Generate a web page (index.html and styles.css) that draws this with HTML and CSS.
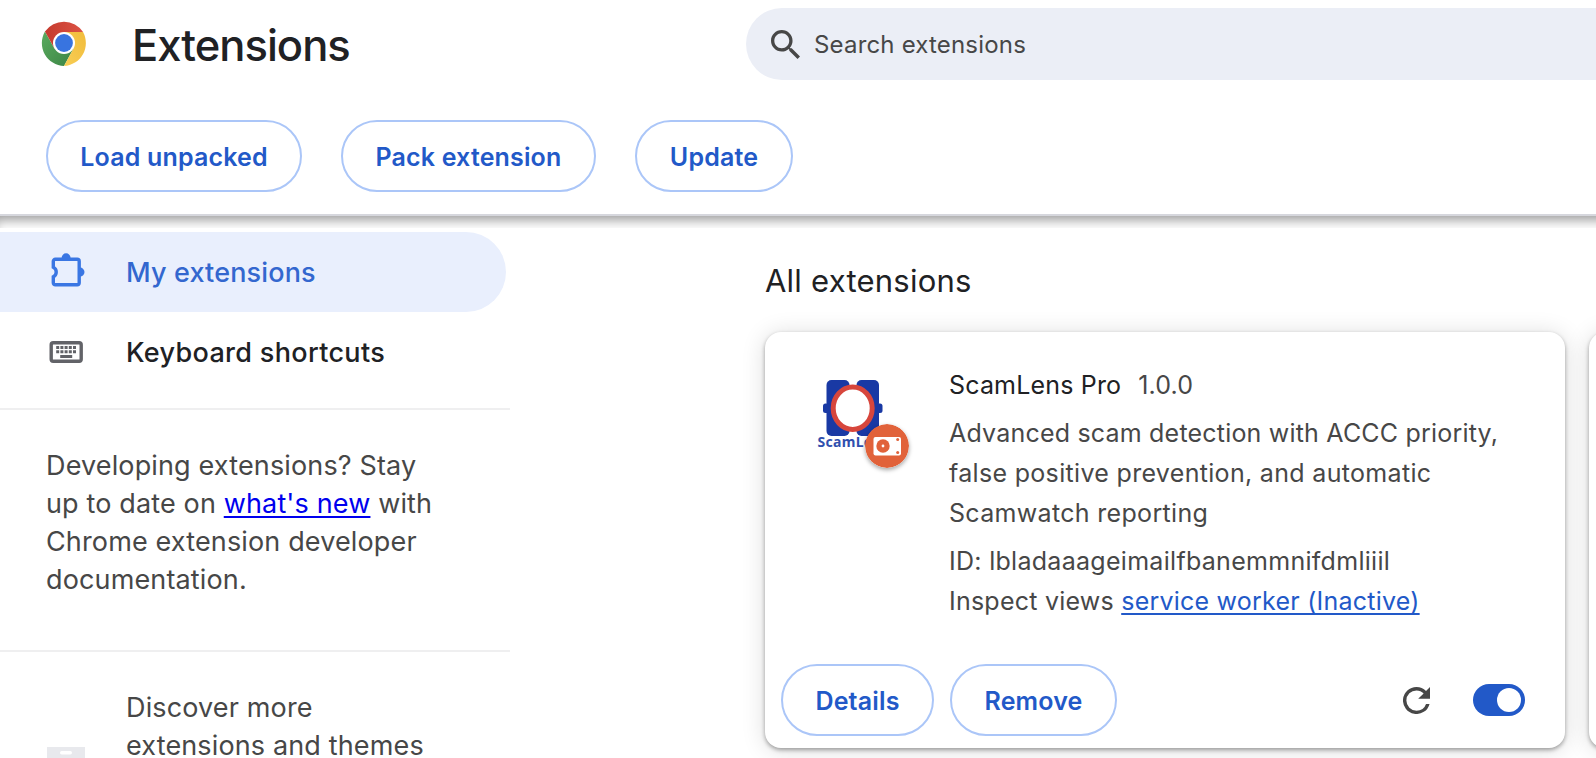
FILE: index.html
```html
<!DOCTYPE html>
<html lang="en">
<head>
<meta charset="utf-8">
<title>Extensions</title>
<link rel="stylesheet" href="styles.css">
</head>
<body>
<header class="toolbar">
  <div class="topbar">
    <div class="brand">
      <svg class="chrome-logo" viewBox="0 0 46 46" aria-hidden="true">
        <defs>
          <linearGradient id="red" x1="0" x2="1"><stop offset="0" stop-color="#c53a2e"/><stop offset="1" stop-color="#dc5344"/></linearGradient>
          <linearGradient id="green" x1="1" x2="0" y1="1" y2="0"><stop offset="0" stop-color="#3b8545"/><stop offset="1" stop-color="#5bab5f"/></linearGradient>
          <linearGradient id="yellow" x1="1" x2="0" y1="0" y2="1"><stop offset="0" stop-color="#f1bc3c"/><stop offset="1" stop-color="#f8ce55"/></linearGradient>
        </defs>
        <path d="M23 23L13.47 28.5L3.95 11.5A23 23 0 0 0 23 46L32.53 28.5Z" fill="url(#green)"/>
        <path d="M23 12H42.05A23 23 0 0 1 23 46L32.53 28.5L23 23Z" fill="url(#yellow)"/>
        <path d="M23 23V12H42.05A23 23 0 0 0 3.95 11.5L13.47 28.5Z" fill="url(#red)"/>
        <circle cx="23" cy="23" r="11" fill="#fff"/>
        <circle cx="23" cy="23" r="8.9" fill="#3874e0"/>
      </svg>
      <h1 class="title">Extensions</h1>
    </div>
    <div class="search">
      <svg class="search-icon" viewBox="3 3 17.49 17.49" aria-hidden="true"><path d="M15.5 14h-.79l-.28-.27C15.41 12.59 16 11.11 16 9.5 16 5.91 13.09 3 9.5 3S3 5.91 3 9.5 5.91 16 9.5 16c1.61 0 3.09-.59 4.23-1.57l.27.28v.79l5 4.99L20.49 19l-4.99-5zm-6 0C7.01 14 5 11.99 5 9.5S7.01 5 9.5 5 14 7.01 14 9.5 11.99 14 9.5 14z"/></svg>
      <span class="search-label">Search extensions</span>
    </div>
  </div>
  <div class="dev-actions">
    <button class="btn load">Load unpacked</button>
    <button class="btn pack">Pack extension</button>
    <button class="btn update">Update</button>
  </div>
</header>
<div class="drop-shadow"></div>
<div class="layout">
  <nav class="sidebar">
    <a class="nav-item selected">
      <svg class="nav-icon" viewBox="0 0 34 34" aria-hidden="true">
        <path d="M5.300 4.300H27.200a2 2 0 0 1 2 2V27.800a2 2 0 0 1-2 2H5.300a2 2 0 0 1-2-2V21.800a5.400 5.400 0 0 0 0-9.600V6.300a2 2 0 0 1 2-2Z" fill="none" stroke="currentColor" stroke-width="3.400"/>
        <path d="M11.600 3a4.500 4.700 0 0 1 9 0ZM30 12.600a4.500 4.500 0 0 1 0 9Z" fill="currentColor"/>
      </svg>
      <span class="nav-my">My extensions</span>
    </a>
    <a class="nav-item">
      <svg class="nav-icon keyboard" viewBox="0.500 0 34 34" aria-hidden="true">
        <rect x="1.700" y="7.700" width="30" height="18.600" rx="2" fill="none" stroke="currentColor" stroke-width="3.400"/>
        <path d="M6.700 11h3v3h-3zM10.900 11h3v3h-3zM15.100 11h3v3h-3zM19.300 11h3v3h-3zM23.500 11h3v3h-3zM6.700 15.300h3v3h-3zM10.900 15.300h3v3h-3zM15.100 15.300h3v3h-3zM19.300 15.300h3v3h-3zM23.500 15.300h3v3h-3zM10.700 20h12v3h-12z" fill="currentColor"/>
      </svg>
      <span class="nav-keys">Keyboard shortcuts</span>
    </a>
    <p class="dev-note">Developing extensions? Stay<br>up to date on <a href="#">what's new</a> with<br>Chrome extension developer<br>documentation.</p>
    <div class="discover">
      <svg class="store-icon" viewBox="0 0 38 30" aria-hidden="true"><path d="M0 0h38v30H0z" fill="#e8e9ed"/><rect x="13" y="4" width="12" height="3.400" rx="1.700" fill="#fff"/></svg>
      <p class="discover-text">Discover more<br>extensions and themes</p>
    </div>
  </nav>
  <main class="content">
    <h2 class="section-title">All extensions</h2>
    <div class="cards">
      <article class="card">
        <div class="card-main">
          <div class="ext-icon">
            <svg class="ext-logo" viewBox="0 0 72 72" aria-hidden="true">
              <g fill="#1939a4">
                <rect x="9.500" y="6" width="23" height="28" rx="5"/>
                <rect x="39.500" y="6" width="22.500" height="28" rx="5"/>
                <rect x="9.500" y="34" width="23" height="28" rx="5"/>
                <rect x="39.500" y="34" width="22.500" height="28" rx="5"/>
                <rect x="15" y="20" width="42" height="28"/>
                <rect x="6" y="29.500" width="9" height="9.500" rx="2.500"/>
                <rect x="56.500" y="29.500" width="9" height="9.500" rx="2.500"/>
              </g>
              <ellipse cx="35.700" cy="34.300" rx="19.500" ry="21.200" fill="#fff" stroke="#d7463c" stroke-width="5"/>
              <text class="logo-text" x="0.500" y="72.500">ScamLens</text>
            </svg>
            <svg class="badge" viewBox="0 0 44 44" aria-hidden="true">
              <circle cx="22" cy="22" r="22" fill="#e1623a"/>
              <rect x="8.500" y="13" width="27.500" height="18.500" rx="2" fill="#fff"/>
              <circle cx="18" cy="22" r="6.700" fill="#e1623a"/>
              <circle cx="18" cy="22" r="1.400" fill="#fff"/>
              <circle cx="32.700" cy="15.600" r="1.500" fill="#e1623a"/>
              <circle cx="32.700" cy="28.600" r="1.500" fill="#e1623a"/>
            </svg>
          </div>
          <div class="card-text">
            <div class="name-row"><span class="ext-name">ScamLens Pro</span><span class="version">1.0.0</span></div>
            <p class="description"><span class="line-first">Advanced scam detection with ACCC priority,</span><br>false positive prevention, and automatic<br>Scamwatch reporting</p>
            <div class="ext-id">ID: lbladaaageimailfbanemmnifdmliiil</div>
            <div class="inspect">Inspect views <a class="view-link" href="#">service worker (Inactive)</a></div>
          </div>
        </div>
        <div class="card-actions">
          <button class="btn details">Details</button>
          <button class="btn remove">Remove</button>
          <svg class="reload" viewBox="4 4 16 16" aria-hidden="true"><path d="M17.650 6.350A7.958 7.958 0 0 0 12 4a8 8 0 1 0 7.730 10h-2.080A5.990 5.990 0 0 1 12 18a6 6 0 1 1 0-12c1.660 0 3.140.69 4.220 1.780L13 11h7V4l-2.350 2.350z"/></svg>
          <span class="toggle"><span class="knob"></span></span>
        </div>
      </article>
      <article class="card"></article>
    </div>
  </main>
</div>
</body>
</html>
```
FILE: styles.css
```css
* { box-sizing: border-box; }
html, body { margin: 0; height: 758px; overflow: hidden; }
body {
  background: #fff;
  color: #474747;
  font-family: Inter, "Liberation Sans", sans-serif;
  font-size: 25px;
}
h1, h2, p { margin: 0; font-weight: 400; }
.toolbar { height: 216px; border-bottom: 2px solid #d6d7dd; }
.topbar { display: flex; padding-top: 8px; }
.brand { display: flex; align-items: center; width: 746px; height: 72px; padding-left: 41px; }
.chrome-logo { width: 46px; height: 46px; margin-bottom: 2px; flex: none; }
.title { margin-left: 45px; font-size: 43.5px; font-weight: 550; line-height: 72px; letter-spacing: -0.98px; color: #202124; padding-top: 2px; }
.search { flex: 1; display: flex; align-items: center; height: 72px; padding-left: 25px; border-radius: 36px 0 0 36px; background: #ebeef6; }
.search-icon { width: 29px; height: 29px; fill: #474747; }
.search-label { margin-left: 14px; padding-top: 2px; font-size: 24px; line-height: 70px; letter-spacing: 0.18px; }
.dev-actions { display: flex; gap: 39px; padding: 40px 0 0 46px; }
.btn {
  height: 72px;
  padding: 2px 0 0;
  border: 2px solid #abc6f8;
  border-radius: 36px;
  background: #fff;
  color: #2259c8;
  font: 600 25px/66px Inter, "Liberation Sans", sans-serif;
  letter-spacing: 0.16px;
  text-align: center;
  white-space: nowrap;
}
.load { width: 256px; }
.pack { width: 255px; }
.update { width: 158px; }
.drop-shadow { height: 12px; margin-right: -14px; box-shadow: inset 0 10px 12px -6px rgba(0, 0, 0, .4); }
.layout { display: flex; height: 530px; }
.sidebar { width: 510px; flex: none; padding-top: 4px; }
.nav-item { display: flex; align-items: center; width: 506px; height: 80px; padding-left: 50px; color: #202124; font-size: 27px; font-weight: 550; white-space: nowrap; }
.nav-item.selected { border-radius: 0 40px 40px 0; background: #e9effd; color: #3367cf; }
.nav-icon { width: 34px; height: 34px; margin-right: 42px; flex: none; overflow: visible; color: #3a76e3; }
.keyboard { color: #626368; }
.nav-my { letter-spacing: 0.15px; }
.nav-keys { letter-spacing: 0.33px; }
.dev-note { margin-top: 16px; height: 244px; padding: 37px 0 0 46px; border-top: 2px solid #efeff0; border-bottom: 2px solid #efeff0; font-size: 27px; line-height: 38px; letter-spacing: 0.14px; white-space: nowrap; }
.dev-note a { color: #0000ee; text-underline-offset: 3px; text-decoration-thickness: 2px; }
.discover { display: flex; padding: 37px 0 0 47px; }
.store-icon { width: 38px; height: 30px; margin-top: 58px; }
.discover-text { margin-left: 41px; font-size: 27px; line-height: 38px; letter-spacing: 0.14px; white-space: nowrap; }
.content { flex: 1; min-width: 0; padding: 28px 0 0 255px; overflow: hidden; }
.section-title { height: 76px; font-size: 31px; line-height: 50px; letter-spacing: 0.23px; color: #202124; white-space: nowrap; }
.cards { display: flex; gap: 24px; }
.card {
  display: flex;
  flex-direction: column;
  flex: none;
  width: 800px;
  height: 416px;
  border-radius: 16px;
  background: #fff;
  box-shadow: 0 2px 4px rgba(0, 0, 0, .35), 0 2px 24px rgba(0, 0, 0, .14);
}
.card-main { display: flex; height: 332px; padding: 33px 0 0 52px; }
.ext-icon { position: relative; width: 72px; height: 72px; margin: 9px 60px 0 0; flex: none; }
.ext-logo { display: block; width: 72px; height: 72px; overflow: visible; }
.logo-text { font: 700 14px "Noto Sans", sans-serif; letter-spacing: 0.3px; fill: #304fae; }
.badge { position: absolute; left: 48px; top: 50px; width: 44px; height: 44px; border-radius: 50%; box-shadow: 0 2px 4px rgba(0, 0, 0, .35); }
.card-text { line-height: 40px; letter-spacing: 0.29px; white-space: nowrap; }
.name-row { display: flex; gap: 17px; letter-spacing: 0.17px; }
.ext-name { color: #202124; }
.description { margin: 8px 0; letter-spacing: 0.32px; }
.line-first { letter-spacing: 0.2px; }
.inspect { letter-spacing: 0.23px; }
.view-link { color: #2259c8; text-decoration-thickness: 2px; text-underline-offset: 3px; }
.card-actions { display: flex; align-items: center; height: 72px; padding-left: 16px; }
.details { width: 153px; margin-right: 16px; }
.remove { width: 167px; }
.reload { width: 27px; height: 27px; margin-left: 286px; fill: #474747; }
.toggle { width: 52px; height: 32px; margin-left: 43px; padding: 4px; border-radius: 16px; background: #2259c8; }
.knob { display: block; width: 24px; height: 24px; margin-left: 20px; border-radius: 50%; background: #fff; }
```
